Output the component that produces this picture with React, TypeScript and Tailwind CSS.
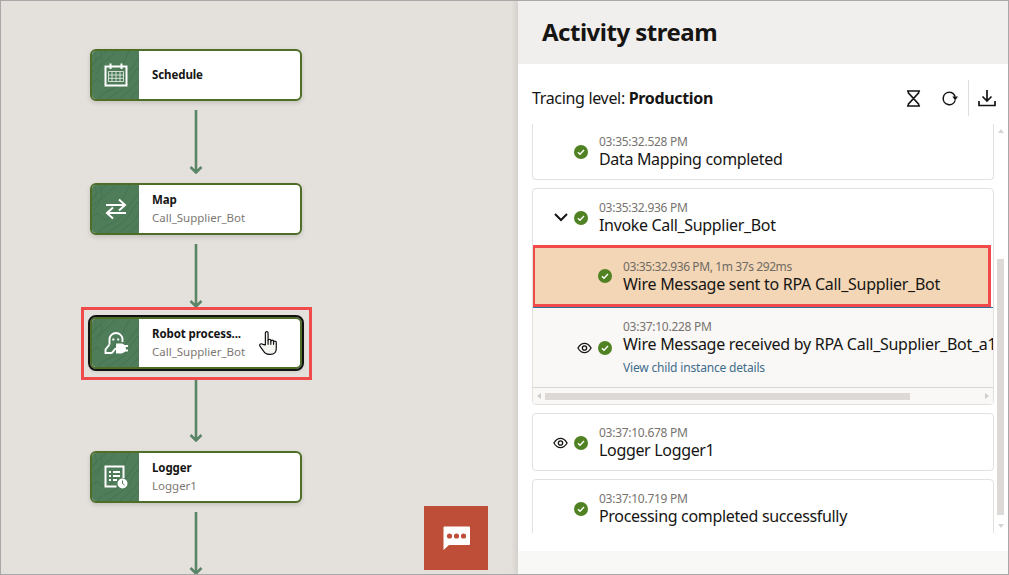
import React from "react";

const FONT = "font-['Noto_Sans','Liberation_Sans',sans-serif]";

function Wood() {
  return (
    <svg viewBox="0 0 48 50" className="absolute inset-0 h-full w-full" fill="none" stroke="#45724f" strokeWidth="1" preserveAspectRatio="none">
      <path d="M0 14C8 6 12 3 14 0M0 22C10 14 20 6 24 0M0 34C6 24 10 36 14 36S30 20 38 0M6 50C12 40 24 42 32 30S44 14 48 8M16 50C24 44 34 40 40 28S46 20 48 18M28 50C34 44 42 40 48 30M38 50C42 46 46 42 48 40" />
      <path d="M2 0C6 6 4 12 0 16M8 0C12 8 10 18 2 26" opacity="0.7" />
    </svg>
  );
}

function CalendarIcon() {
  return (
    <svg viewBox="0 0 24 24" width="24" height="24" fill="none" stroke="#fff">
      <path d="M1.5 3.5H22.5V22.5H1.5Z" strokeWidth="2" />
      <path d="M6.5 0.5V6M17.5 0.5V6" strokeWidth="2" />
      <path d="M4.5 8.5H19.5V18.5H4.5Z M4.5 12H19.5M4.5 15.3H19.5M8 8.5V18.5M12 8.5V18.5M16 8.5V18.5" strokeWidth="0.9" opacity="0.8" />
    </svg>
  );
}

function MapIcon() {
  return (
    <svg viewBox="0 0 24 24" width="24" height="24" fill="none" stroke="#fff" strokeWidth="2">
      <path d="M2 8H21M15 2.5L21 8L15 13.5" />
      <path d="M22 16H3M9 10.5L3 16L9 21.5" />
    </svg>
  );
}

function RobotIcon() {
  return (
    <svg viewBox="0 0 24 24" width="24" height="24" fill="none" stroke="#fff" strokeWidth="1.9">
      <path d="M5.5 13.5V8.5A6.5 6.5 0 0 1 18.5 8.5V11" />
      <path d="M9.3 7.5V9.5M14.2 7.5V9.5" strokeWidth="2" />
      <path d="M5.5 13.5L1.5 18.5V22H7C9.5 22 9.5 17.5 12.5 17.5" />
      <path d="M13 13.5H17A4 4 0 0 1 17 21.5H13Z" fill="#fff" />
      <path d="M20 15H24M20 19.5H24" />
    </svg>
  );
}

function LoggerIcon() {
  return (
    <svg viewBox="0 0 24 24" width="24" height="24" fill="none" stroke="#fff">
      <path d="M12.5 21.5H1.5V1.5H19.5V13" strokeWidth="2" />
      <path d="M5 7H7M9 7H16M5 11H7M9 11H16M5 15H7M9 15H13" strokeWidth="1.8" />
      <circle cx="18.5" cy="18.5" r="5" fill="#fff" stroke="none" />
      <path d="M18.5 15.5V18.5L20.5 20" stroke="#4f7d5a" strokeWidth="1" />
    </svg>
  );
}

function Hand() {
  return (
    <svg viewBox="0 0 22 28" width="20" height="26" className="absolute left-[167px] top-[11px]" fill="#f4f5f1" stroke="#111" strokeWidth="1.3" strokeLinejoin="round" strokeLinecap="round">
      <path d="M7 16V3C7 1 10 1 10 3V11C10 9.5 13 9.5 13 11V12C13 10.5 16 10.5 16 12V13C16 11.5 19 11.5 19 13V20C19 24 16.5 26.5 12.5 26.5H11C8 26.5 6.5 25.5 5 23L1 17.5C0 15.5 2.5 14 4 15.5Z" />
      <path d="M10 11V15.5M13 12V15.5M16 13V15.5" fill="none" />
    </svg>
  );
}

function Arrow({ h }: { h: number }) {
  return (
    <svg width="14" height={h} viewBox={`0 0 14 ${h}`} fill="none" stroke="#5b8567" strokeWidth="2.6" className="block">
      <path d={`M7 0V${h - 2}M1.5 ${h - 7}L7 ${h - 1.5}L12.5 ${h - 7}`} />
    </svg>
  );
}

function Node({ title, sub, icon, selected }: { title: string; sub?: string; icon: React.ReactNode; selected?: boolean }) {
  return (
    <div className={`relative flex h-[52px] w-[212px] overflow-hidden rounded-[6px] border-2 border-[#4e6d26] bg-white shadow-[0_2px_5px_rgba(0,0,0,0.14)] ${selected ? "outline-2 outline-[#111]" : ""}`}>
      <div className="relative flex w-[47px] shrink-0 items-center justify-center bg-[#4f7d5a]">
        <Wood />
        <div className="relative flex">{icon}</div>
      </div>
      <div className="flex flex-col justify-center pl-[13px] leading-[18px]">
        <div className="text-[11.5px] font-bold tracking-[-0.1px] text-[#161513]">{title}</div>
        {sub && <div className="text-[11.5px] text-[#7c7873]">{sub}</div>}
      </div>
      {selected && <Hand />}
    </div>
  );
}

function Check() {
  return (
    <svg viewBox="0 0 14 14" width="14" height="14" className="block shrink-0">
      <circle cx="7" cy="7" r="7" fill="#508223" />
      <path d="M3.9 7.2L6 9.2L10 5.1" fill="none" stroke="#fff" strokeWidth="1.4" />
    </svg>
  );
}

function Eye() {
  return (
    <svg viewBox="0 0 16 12" width="15" height="12" fill="none" stroke="#161513" strokeWidth="1.4" className="block shrink-0">
      <path d="M1 6C3 2.5 5.3 1 8 1S13 2.5 15 6C13 9.5 10.7 11 8 11S3 9.5 1 6Z" />
      <circle cx="8" cy="6" r="2.3" />
    </svg>
  );
}

function Entry({ time, text, left, h }: { time: string; text: string; left?: React.ReactNode; h: string }) {
  return (
    <div className={`flex shrink-0 items-start ${h}`}>
      <div className="flex h-[52px] w-[59px] shrink-0 items-center justify-end gap-[6px] pt-[5px] pr-[4px]">
        {left}
        <Check />
      </div>
      <div className="pl-[7px] pt-[11px]">
        <div className="text-[12px] leading-[15px] tracking-[-0.27px] text-[#77736e]">{time}</div>
        <div className="text-[16px] leading-[20px] tracking-[-0.33px] text-[#161513]">{text}</div>
      </div>
    </div>
  );
}

function Chevron() {
  return (
    <svg viewBox="0 0 14 9" width="14" height="9" fill="none" stroke="#161513" strokeWidth="2" className="block shrink-0">
      <path d="M1 1L7 7L13 1" />
    </svg>
  );
}

export default function App() {
  return (
    <div className={`${FONT} relative flex h-[575px] w-[1009px] overflow-hidden border border-[#a8a8a8] bg-[#e4e1dc]`}>
      <main className="flex w-[517px] shrink-0 flex-col pl-[89px] pt-[48px]">
        <div className="flex w-[212px] flex-col items-center">
          <Node title="Schedule" icon={<CalendarIcon />} />
          <div className="pt-[9px] pb-[9px]"><Arrow h={64} /></div>
          <Node title="Map" sub="Call_Supplier_Bot" icon={<MapIcon />} />
          <div className="pt-[9px] pb-[9px]"><Arrow h={64} /></div>
          <Node title="Robot process..." sub="Call_Supplier_Bot" icon={<RobotIcon />} selected />
          <div className="pt-[9px] pb-[9px]"><Arrow h={64} /></div>
          <Node title="Logger" sub="Logger1" icon={<LoggerIcon />} />
          <div className="pt-[9px]"><Arrow h={63} /></div>
        </div>
      </main>

      <aside className="flex w-[490px] shrink-0 flex-col bg-white shadow-[-3px_0_5px_rgba(0,0,0,0.08)]">
        <div className="flex h-[63px] shrink-0 items-center bg-[#f1efed] pb-[2px] pl-[24px]">
          <h1 className="text-[24px] leading-[32px] font-bold tracking-[-0.5px] text-[#161513]">Activity stream</h1>
        </div>
        <div className="flex h-[60px] shrink-0 items-center pl-[14px] pr-[12px] pt-[8px]">
          <div className="text-[16px] tracking-[-0.33px] text-[#161513]">Tracing level: <b>Production</b></div>
          <div className="ml-auto flex items-center">
            <svg viewBox="0 0 16 18" width="15" height="17" fill="none" stroke="#161513" strokeWidth="1.6" className="mr-[20px]">
              <path d="M1 1H15M1 17H15M2.5 1V3L13.5 15V17M13.5 1V3L2.5 15V17" />
            </svg>
            <svg viewBox="0 0 18 18" width="17" height="17" fill="none" stroke="#161513" strokeWidth="1.6" className="mr-[10px]">
              <path d="M15 11A6.5 6.5 0 1 1 9 2.5C11.5 2.5 13.5 3.5 15 7" />
              <path d="M18 7H12L15 11Z" fill="#161513" stroke="none" />
            </svg>
            <div className="h-[36px] w-px bg-[#e0dedb]" />
            <svg viewBox="0 0 18 18" width="18" height="18" fill="none" stroke="#161513" strokeWidth="1.7" className="ml-[9px]">
              <path d="M9 1V12M4.5 7.5L9 12L13.5 7.5M1 12V16.5H17V12" />
            </svg>
          </div>
        </div>

        <div className="relative flex h-[409px] shrink-0">
          <div className="ml-[14px] flex w-[462px] flex-col gap-[8px] overflow-hidden">
            <div className="shrink-0 rounded-b-[4px] border border-t-0 border-[#e3e1de]">
              <Entry time="03:35:32.528 PM" text="Data Mapping completed" h="h-[56px] -mt-[1px]" />
            </div>

            <div className="flex h-[217px] shrink-0 flex-col overflow-hidden rounded-[4px] border border-[#e3e1de]">
              <Entry time="03:35:32.936 PM" text="Invoke Call_Supplier_Bot" left={<Chevron />} h="h-[56px]" />
              <div className="h-[63px] shrink-0 border-b border-[#2f6f9f]">
                <div className="-ml-px flex h-[62px] w-[459px] items-center border-[3px] border-[#f04a4a] bg-[#f3d6b6]">
                  <div className="flex w-[79px] shrink-0 justify-end pr-[2px]"><Check /></div>
                  <div className="pl-[9px] pt-[1px]">
                    <div className="text-[12px] leading-[15px] tracking-[-0.4px] text-[#6f6a63]">03:35:32.936 PM, 1m 37s 292ms</div>
                    <div className="text-[16px] leading-[20px] tracking-[-0.27px] text-[#161513]">Wire Message sent to RPA Call_Supplier_Bot</div>
                  </div>
                </div>
              </div>
              <div className="flex h-[80px] shrink-0 items-center border-b border-[#d9d7d3] bg-[#f9f8f6]">
                <div className="flex w-[81px] shrink-0 items-center justify-end gap-[6px] pr-[2px]">
                  <Eye />
                  <Check />
                </div>
                <div className="min-w-0 pb-[1px] pl-[9px]">
                  <div className="text-[12px] leading-[15px] tracking-[-0.27px] text-[#77736e]">03:37:10.228 PM</div>
                  <div className="whitespace-nowrap text-[16px] leading-[20px] tracking-[-0.27px] text-[#161513]">Wire Message received by RPA Call_Supplier_Bot_a1</div>
                  <div className="pt-[6px] text-[12px] leading-[16px] tracking-[-0.18px] text-[#3e6d8c]">View child instance details</div>
                </div>
              </div>
              <div className="flex h-[16px] shrink-0 items-center bg-[#f9f8f6] pl-[4px] pr-[4px]">
                <div className="h-0 w-0 border-y-[3px] border-r-[4px] border-y-transparent border-r-[#cfcdca]" />
                <div className="ml-[4px] h-[7px] w-[365px] bg-[#dcd9d6]" />
                <div className="ml-auto h-0 w-0 border-y-[3px] border-l-[4px] border-y-transparent border-l-[#cfcdca]" />
              </div>
            </div>

            <div className="shrink-0 rounded-[4px] border border-[#e3e1de]">
              <Entry time="03:37:10.678 PM" text="Logger Logger1" left={<Eye />} h="h-[56px]" />
            </div>

            <div className="shrink-0 rounded-[4px] border border-[#e3e1de]">
              <Entry time="03:37:10.719 PM" text="Processing completed successfully" h="h-[80px]" />
            </div>
          </div>

          <div className="ml-[3px] flex w-[7px] flex-col items-center">
            <div className="mt-[5px] h-0 w-0 border-x-[3px] border-b-[4px] border-x-transparent border-b-[#d6d4d1]" />
            <div className="mt-[126px] h-[256px] w-[7px] bg-[#dcd9d6]" />
            <div className="mt-[9px] h-0 w-0 border-x-[3px] border-t-[4px] border-x-transparent border-t-[#d6d4d1]" />
          </div>
        </div>

        <div className="h-[18px] shrink-0" />
        <div className="flex-1 bg-[#f8f8f6]" />
      </aside>

      <button className="absolute left-[423px] top-[505px] flex h-[64px] w-[64px] items-center justify-center bg-[#bf4e38]">
        <svg viewBox="0 0 27 24" width="27" height="24">
          <path d="M0.5 1.5C0.5 0.8 1 0.5 1.5 0.5H26C26.5 0.5 27 0.8 27 1.5V18C27 18.7 26.5 19 26 19H6L0.5 24Z" fill="#fff" />
          <circle cx="6.5" cy="10" r="2.6" fill="#bf4e38" />
          <circle cx="13.5" cy="10" r="2.6" fill="#bf4e38" />
          <circle cx="20.5" cy="10" r="2.6" fill="#bf4e38" />
        </svg>
      </button>

      <div className="pointer-events-none absolute left-[80px] top-[306px] h-[73px] w-[231px] border-[3px] border-[#f04a4a]" />
    </div>
  );
}
